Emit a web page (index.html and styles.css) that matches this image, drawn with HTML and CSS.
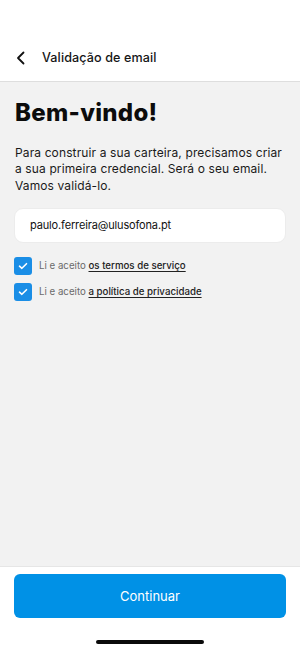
FILE: index.html
```html
<!DOCTYPE html>
<html lang="pt">
<head>
<meta charset="utf-8">
<link rel="stylesheet" href="styles.css">
</head>
<body>
<div class="screen">
  <header class="topbar">
    <svg class="back" width="10" height="14" viewBox="0 0 10 14"><path d="M7.5 1.5 L2 7 L7.5 12.5" fill="none" stroke="#111" stroke-width="1.8" stroke-linecap="round" stroke-linejoin="round"/></svg>
    <span class="title">Validação de email</span>
  </header>
  <main class="content">
    <h1 class="welcome">Bem-vindo!</h1>
    <p class="intro">Para construir a sua carteira, precisamos criar<br>a sua primeira credencial. Será o seu email.<br>Vamos validá-lo.</p>
    <div class="field">paulo.ferreira@ulusofona.pt</div>
    <div class="checks">
      <label class="check">
        <span class="box"><svg width="10" height="8" viewBox="0 0 10 8"><path d="M1.5 4.2 L3.9 6.3 L8.5 1.7" fill="none" stroke="#fff" stroke-width="1.6" stroke-linecap="round" stroke-linejoin="round"/></svg></span>
        <span class="label">Li e aceito <a class="link">os termos de serviço</a></span>
      </label>
      <label class="check">
        <span class="box"><svg width="10" height="8" viewBox="0 0 10 8"><path d="M1.5 4.2 L3.9 6.3 L8.5 1.7" fill="none" stroke="#fff" stroke-width="1.6" stroke-linecap="round" stroke-linejoin="round"/></svg></span>
        <span class="label">Li e aceito <a class="link">a política de privacidade</a></span>
      </label>
    </div>
  </main>
  <footer class="bottom">
    <button class="cta">Continuar</button>
    <div class="home"></div>
  </footer>
</div>
</body>
</html>
```
FILE: styles.css
```css
* { box-sizing: border-box; }
html, body { margin: 0; padding: 0; }
body {
  font-family: Inter, "Noto Sans", sans-serif;
  color: #111;
  background: #fff;
}
.screen {
  width: 300px;
  height: 650px;
  display: flex;
  flex-direction: column;
}
.topbar {
  height: 82px;
  background: #fff;
  border-bottom: 1px solid #dedede;
  display: flex;
  align-items: center;
  padding: 34px 0 0 16px;
  gap: 16px;
}
.back { display: block; }
.title {
  font-size: 12.6px;
  font-weight: 500;
  letter-spacing: 0.1px;
  color: #161616;
}
.content {
  flex: 1;
  background: #f2f2f2;
  padding: 0 14px;
}
.welcome {
  margin: 16px 0 0 1px;
  font-size: 24px;
  font-weight: 800;
  letter-spacing: 0.3px;
  line-height: 30px;
  color: #0c0c0c;
}
.intro {
  margin: 17px 0 0 1px;
  font-size: 12px;
  line-height: 16.3px;
  letter-spacing: 0.12px;
  color: #1a1a1a;
  white-space: nowrap;
}
.field {
  margin-top: 14px;
  height: 35px;
  background: #fff;
  border: 1px solid #ececec;
  border-radius: 9px;
  display: flex;
  align-items: center;
  padding-left: 15px;
  font-size: 11px;
  letter-spacing: -0.15px;
  color: #111;
}
.checks {
  margin-top: 14px;
  display: flex;
  flex-direction: column;
  gap: 8px;
}
.check {
  display: flex;
  align-items: center;
  gap: 7px;
}
.box {
  width: 18px;
  height: 18px;
  border-radius: 3px;
  background: #1a8ee6;
  display: flex;
  align-items: center;
  justify-content: center;
}
.label {
  font-size: 9.7px;
  color: #6a6a6a;
}
.link {
  color: #222;
  font-weight: 500;
  text-decoration: underline;
  text-underline-offset: 2px;
}
.bottom {
  height: 84px;
  background: #fff;
  border-top: 1px solid #e6e6e6;
  padding: 7px 14px 0;
  display: flex;
  flex-direction: column;
  align-items: center;
}
.cta {
  width: 272px;
  height: 44px;
  border: none;
  border-radius: 6px;
  background: #0091e6;
  color: #fff;
  font-family: Inter, "Noto Sans", sans-serif;
  font-size: 13px;
  font-weight: 400;
}
.home {
  margin-top: 22px;
  width: 108px;
  height: 4px;
  border-radius: 2px;
  background: #0a0a0a;
}
```
